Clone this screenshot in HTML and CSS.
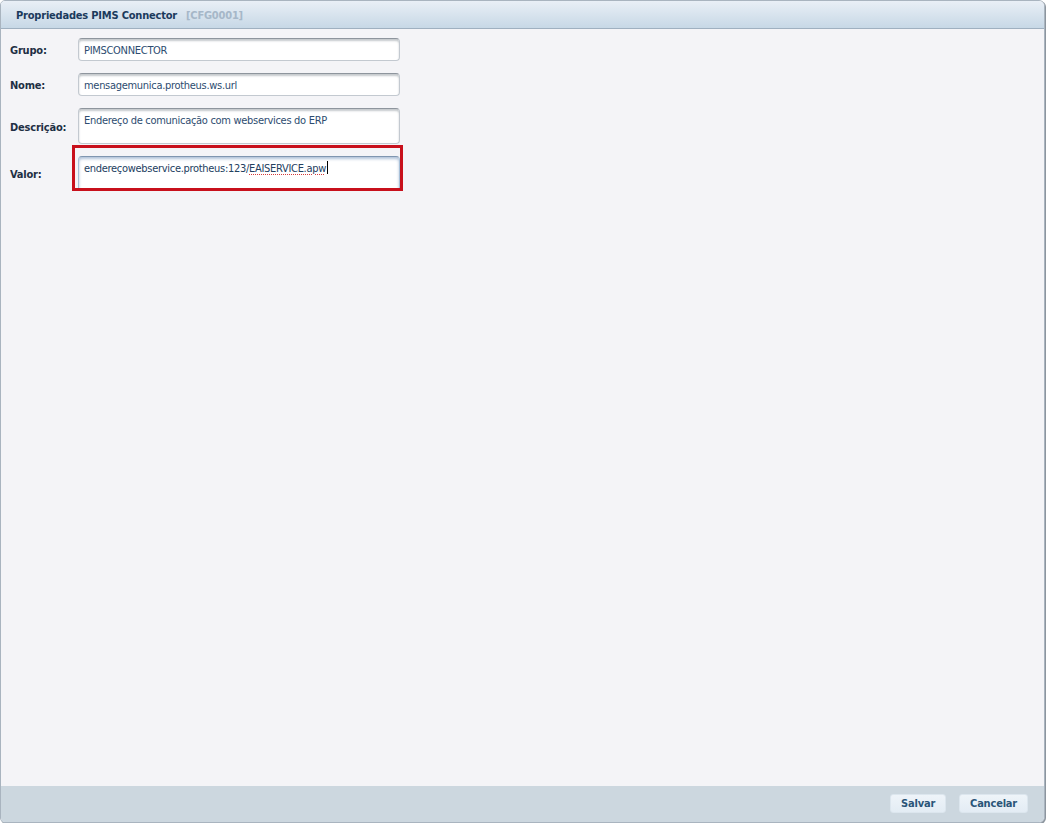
FILE: index.html
```html
<!DOCTYPE html>
<html lang="pt-BR">
<head>
<meta charset="utf-8">
<title>Propriedades PIMS Connector</title>
<link rel="stylesheet" href="styles.css">
</head>
<body>
<div class="window">
  <header class="titlebar">
    <span class="title">Propriedades PIMS Connector</span>
    <span class="code">[CFG0001]</span>
  </header>
  <main class="form">
    <div class="row">
      <label class="label">Grupo:</label>
      <div class="field">PIMSCONNECTOR</div>
    </div>
    <div class="row">
      <label class="label">Nome:</label>
      <div class="field">mensagemunica.protheus.ws.url</div>
    </div>
    <div class="row row-tall">
      <label class="label">Descrição:</label>
      <div class="field field-area">Endereço de comunicação com webservices do ERP</div>
    </div>
    <div class="row row-value">
      <label class="label">Valor:</label>
      <div class="highlight">
        <div class="field field-focus">endereçowebservice.protheus:123/<span class="spell">EAISERVICE.apw</span><span class="caret"></span></div>
      </div>
    </div>
  </main>
  <footer class="footer">
    <button class="btn">Salvar</button>
    <button class="btn">Cancelar</button>
  </footer>
</div>
</body>
</html>
```
FILE: styles.css
```css
* { box-sizing: border-box; }

html, body {
  margin: 0;
  padding: 0;
  background: #ffffff;
}

body {
  font-family: Tahoma, "DejaVu Sans Condensed", "DejaVu Sans", sans-serif;
  font-size: 11px;
  color: #1f3550;
}

.window {
  width: 1045px;
  height: 823px;
  display: flex;
  flex-direction: column;
  background: #f4f4f7;
  border: 1px solid #a9b4bf;
  border-radius: 5px 6px 6px 5px;
  box-shadow: 1px 1px 0 #8c959e;
  overflow: hidden;
}

.titlebar {
  height: 28px;
  flex: none;
  display: flex;
  align-items: center;
  padding: 1px 0 0 15px;
  background: linear-gradient(#e9eff6, #c7d8e6);
  border-bottom: 1px solid #9fb0c0;
}

.title {
  font-weight: bold;
  letter-spacing: -0.2px;
  color: #1b3a5c;
}

.code {
  margin-left: 9px;
  font-weight: bold;
  letter-spacing: -0.2px;
  color: #a6b7c8;
}

.form {
  flex: 1;
  display: flex;
  flex-direction: column;
  padding: 9px 0 0 9px;
}

.row {
  display: flex;
  align-items: center;
  margin-bottom: 12px;
}

.label {
  width: 68px;
  flex: none;
  padding-top: 1px;
  font-weight: bold;
  letter-spacing: -0.2px;
  color: #1e2f44;
}

.field {
  width: 322px;
  height: 23px;
  padding: 5px 5px 0;
  background: #ffffff;
  border: 1px solid #c3c9d0;
  border-top-color: #8e959d;
  border-radius: 4px;
  box-shadow: inset 0 2px 2px rgba(90, 100, 110, 0.35);
  color: #2d4c70;
  letter-spacing: -0.3px;
  white-space: nowrap;
}

.field-area {
  height: 36px;
}

.row-tall .label {
  padding-top: 2px;
}

.row-value {
  margin-top: -11px;
}

.row-value .label {
  padding-top: 13px;
}

/* red frame around the edited value */
.highlight {
  width: 331px;
  height: 46px;
  margin-left: -6px;
  padding: 8px 0 0 3px;
  border: 3px solid #c8101c;
  overflow: hidden;
}

.field-focus {
  height: 40px;
  padding-top: 4px;
  border-color: #a8c0d8;
  border-top-color: #7f96b0;
  box-shadow: inset 0 2px 3px rgba(80, 120, 170, 0.45);
  color: #23405f;
}

.spell {
  text-decoration: underline dotted #d23a3a;
  text-decoration-thickness: 1px;
  text-underline-offset: 2px;
}

.caret {
  display: inline-block;
  width: 1px;
  height: 13px;
  margin-left: 1px;
  vertical-align: -2px;
  background: #000;
}

.footer {
  height: 36px;
  flex: none;
  display: flex;
  justify-content: flex-end;
  align-items: center;
  gap: 13px;
  padding: 0 16px 1px 0;
  background: #ccd7df;
}

.btn {
  height: 19px;
  padding: 0 10px;
  font-family: inherit;
  font-size: 11px;
  font-weight: bold;
  letter-spacing: -0.2px;
  color: #2a5578;
  background: linear-gradient(#eef4f9, #e3ecf4);
  border: 1px solid #dce6ee;
  border-radius: 3px;
}
```
